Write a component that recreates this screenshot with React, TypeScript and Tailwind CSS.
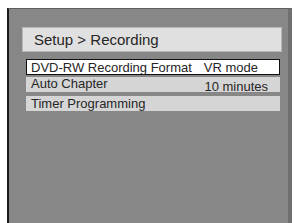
import React from "react";

export default function App() {
  const font = { fontFamily: '"Liberation Sans", Arial, sans-serif' };
  return (
    <div className="w-[299px] h-[223px] bg-white pt-[8px] pl-[7px] overflow-hidden" style={font}>
      <div className="h-[220px] w-[285px] bg-[#878787] border-l-2 border-l-[#1a1a1a] border-t border-t-[#5e5e5e] border-r-4 border-r-[#707070] pt-[18px] pl-[13px]">
        <div className="w-[260px] h-[25px] bg-[#e0e0e0] border border-[#b8b8b8] flex items-center pl-[11px] text-[15px] leading-none text-[#262626]">
          Setup &gt; Recording
        </div>
        <div className="ml-[4px] mt-[7px] w-[254px] flex flex-col gap-[2px] text-[13px] leading-none text-[#262626]">
          <div className="h-[16px] bg-white border-[1.5px] border-[#111] flex items-center justify-between pl-[4px] pr-[21px]">
            <span>DVD-RW Recording Format</span>
            <span>VR mode</span>
          </div>
          <div className="h-[15px] bg-[#d5d5d5] flex items-center justify-between pl-[5px] pr-[12px]">
            <span className="-translate-y-[1px]">Auto Chapter</span>
            <span className="translate-y-[2px]">10 minutes</span>
          </div>
          <div className="h-[15px] mt-[2px] bg-[#d5d5d5] flex items-center pl-[5px]">
            <span>Timer Programming</span>
          </div>
        </div>
      </div>
    </div>
  );
}
